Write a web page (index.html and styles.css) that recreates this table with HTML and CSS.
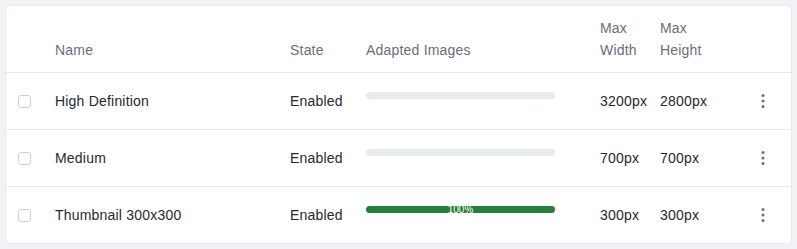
FILE: index.html
```html
<!DOCTYPE html>
<html>
<head>
<meta charset="utf-8">
<link rel="stylesheet" href="styles.css">
</head>
<body>
<div class="card">
  <table class="tbl">
    <colgroup>
      <col class="c-check"><col class="c-name"><col class="c-state"><col class="c-adapt"><col class="c-w"><col class="c-h"><col class="c-act">
    </colgroup>
    <thead>
      <tr>
        <th></th>
        <th>Name</th>
        <th>State</th>
        <th>Adapted Images</th>
        <th>Max<br>Width</th>
        <th>Max<br>Height</th>
        <th></th>
      </tr>
    </thead>
    <tbody>
      <tr>
        <td><span class="check"></span></td>
        <td>High Definition</td>
        <td>Enabled</td>
        <td><div class="progress"><div class="fill" style="width:0%"></div></div></td>
        <td>3200px</td>
        <td>2800px</td>
        <td class="act"><svg class="kebab" width="4" height="16" viewBox="0 0 4 16"><circle cx="2" cy="2.5" r="1.5"/><circle cx="2" cy="8" r="1.5"/><circle cx="2" cy="13.5" r="1.5"/></svg></td>
      </tr>
      <tr>
        <td><span class="check"></span></td>
        <td>Medium</td>
        <td>Enabled</td>
        <td><div class="progress"><div class="fill" style="width:0%"></div></div></td>
        <td>700px</td>
        <td>700px</td>
        <td class="act"><svg class="kebab" width="4" height="16" viewBox="0 0 4 16"><circle cx="2" cy="2.5" r="1.5"/><circle cx="2" cy="8" r="1.5"/><circle cx="2" cy="13.5" r="1.5"/></svg></td>
      </tr>
      <tr>
        <td><span class="check"></span></td>
        <td>Thumbnail 300x300</td>
        <td>Enabled</td>
        <td><div class="progress"><div class="fill done" style="width:100%">100%</div></div></td>
        <td>300px</td>
        <td>300px</td>
        <td class="act"><svg class="kebab" width="4" height="16" viewBox="0 0 4 16"><circle cx="2" cy="2.5" r="1.5"/><circle cx="2" cy="8" r="1.5"/><circle cx="2" cy="13.5" r="1.5"/></svg></td>
      </tr>
    </tbody>
  </table>
</div>
</body>
</html>
```
FILE: styles.css
```css
html, body {
  margin: 0;
  padding: 0;
  background: #f1f2f5;
}
body {
  padding: 5px;
  font-family: "Liberation Sans", Arial, sans-serif;
  font-size: 14px;
  letter-spacing: 0.2px;
  color: #272833;
}
.card {
  background: #fff;
  border: 1px solid #e7e7ed;
  border-radius: 4px;
  overflow: hidden;
}
.tbl {
  width: 100%;
  border-collapse: collapse;
  table-layout: fixed;
}
.c-check { width: 37px; }
.c-name { width: 235px; }
.c-state { width: 76px; }
.c-adapt { width: 234px; }
.c-w { width: 60px; }
.c-h { width: 92px; }
.tbl th {
  height: 44px;
  padding: 11px 12px;
  text-align: left;
  vertical-align: bottom;
  font-weight: normal;
  color: #6b6c7e;
  line-height: 22px;
  border-bottom: 1px solid #e7e7ed;
}
.tbl th:nth-child(5), .tbl th:nth-child(6) { padding-right: 0; }
.tbl td {
  height: 56px;
  padding: 0 12px;
  vertical-align: middle;
  line-height: 20px;
  border-bottom: 1px solid #e7e7ed;
  white-space: nowrap;
}
.tbl td:nth-child(5), .tbl td:nth-child(6) { padding-right: 0; }
.tbl tbody tr:last-child td { border-bottom: none; }
.check {
  display: block;
  width: 11px;
  height: 11px;
  border: 1px solid #cdced9;
  border-radius: 3px;
  background: #fff;
  margin-top: 1px;
}
.progress {
  width: 189px;
  height: 7px;
  border-radius: 4px;
  background: #e9eaee;
  margin-bottom: 11px;
}
.fill {
  height: 7px;
  border-radius: 4px;
  font-size: 10px;
  letter-spacing: 0;
  line-height: 7px;
  text-align: center;
  color: #fff;
}
.fill.done { background: #287d3c; }
.kebab { display: block; margin-left: 9px; fill: #6b6c7e; }
```
